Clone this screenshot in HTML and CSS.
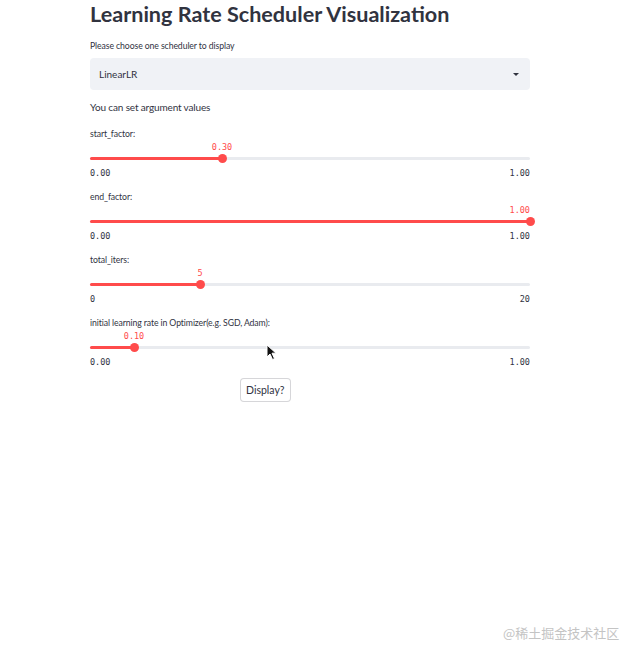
FILE: index.html
```html
<!DOCTYPE html>
<html>
<head>
<meta charset="utf-8">
<link rel="stylesheet" href="styles.css">
</head>
<body>
<main class="main">
  <h1 class="title">Learning Rate Scheduler Visualization</h1>
  <div class="small-label">Please choose one scheduler to display</div>
  <div class="select">
    <span>LinearLR</span>
    <span class="caret"></span>
  </div>
  <p class="text">You can set argument values</p>

  <div class="slider">
    <div class="small-label">start_factor:</div>
    <div class="value-row"><span class="value" style="left:30%">0.30</span></div>
    <div class="track"><div class="fill" style="width:30%"><span class="thumb"></span></div></div>
    <div class="ticks"><span>0.00</span><span>1.00</span></div>
  </div>

  <div class="slider">
    <div class="small-label">end_factor:</div>
    <div class="value-row"><span class="value value-end">1.00</span></div>
    <div class="track"><div class="fill" style="width:100%"><span class="thumb"></span></div></div>
    <div class="ticks"><span>0.00</span><span>1.00</span></div>
  </div>

  <div class="slider">
    <div class="small-label">total_iters:</div>
    <div class="value-row"><span class="value" style="left:25%">5</span></div>
    <div class="track"><div class="fill" style="width:25%"><span class="thumb"></span></div></div>
    <div class="ticks"><span>0</span><span>20</span></div>
  </div>

  <div class="slider">
    <div class="small-label">initial learning rate in Optimizer(e.g. SGD, Adam):</div>
    <div class="value-row"><span class="value" style="left:10%">0.10</span></div>
    <div class="track"><div class="fill" style="width:10%"><span class="thumb"></span></div></div>
    <div class="ticks"><span>0.00</span><span>1.00</span></div>
  </div>

  <div class="button-row"><button class="button">Display?</button></div>
</main>

<svg class="cursor" width="12" height="17" viewBox="0 0 12 17">
  <path d="M1 1 L1 13 L4 10 L6.5 15.5 L8.5 14.6 L6 9.2 L10 9.2 Z" fill="#111" stroke="#fff" stroke-width="1"/>
</svg>

<div class="watermark">@稀土掘金技术社区</div>
</body>
</html>
```

FILE: styles.css
```css
html, body {
  margin: 0;
  padding: 0;
  background: #ffffff;
}
body {
  width: 640px;
  height: 658px;
  position: relative;
  overflow: hidden;
  font-family: Lato, "Open Sans", sans-serif;
  color: #31333f;
}
.main {
  width: 440px;
  margin-left: 90px;
  display: flex;
  flex-direction: column;
}
.title {
  margin: 0;
  font-size: 21.6px;
  line-height: 28px;
  font-weight: 700;
  color: #31333f;
}
.small-label {
  font-size: 8.7px;
  line-height: 14px;
  letter-spacing: -0.1px;
  color: #31333f;
}
.main > .small-label {
  margin-top: 11px;
}
.select {
  margin-top: 5px;
  height: 32px;
  background: #f0f2f6;
  border-radius: 4px;
  display: flex;
  align-items: center;
  justify-content: space-between;
  padding: 0 11px 0 9px;
  font-size: 10px;
}
.caret {
  width: 0;
  height: 0;
  border-left: 3px solid transparent;
  border-right: 3px solid transparent;
  border-top: 3.5px solid #31333f;
}
.text {
  margin: 10px 0 0;
  font-size: 10px;
  line-height: 14px;
  letter-spacing: -0.15px;
}
.slider {
  margin-top: 13px;
  display: flex;
  flex-direction: column;
}
.slider + .slider {
  margin-top: 11px;
}
.value-row {
  position: relative;
  height: 12px;
}
.value {
  position: absolute;
  top: 0;
  transform: translateX(-50%);
  font-family: "DejaVu Sans Mono", monospace;
  font-size: 8.5px;
  line-height: 12px;
  color: #ff4b4b;
}
.value-end {
  right: 0;
  transform: none;
}
.track {
  height: 3px;
  margin: 4px 0 3px;
  background: #e9ebef;
  border-radius: 2px;
  position: relative;
}
.fill {
  height: 100%;
  background: #ff4b4b;
  border-radius: 2px;
  position: relative;
}
.thumb {
  position: absolute;
  right: -4.5px;
  top: -3px;
  width: 9px;
  height: 9px;
  border-radius: 50%;
  background: #ff4b4b;
}
.ticks {
  margin-top: 4px;
  display: flex;
  justify-content: space-between;
  font-family: "DejaVu Sans Mono", monospace;
  font-size: 8.5px;
  line-height: 12px;
  color: #31333f;
}
.button-row {
  margin-top: 10px;
  padding-left: 150px;
}
.button {
  height: 24px;
  padding: 0 5px;
  background: #ffffff;
  border: 1px solid rgba(49, 51, 63, 0.2);
  border-radius: 4px;
  font-family: Lato, "Open Sans", sans-serif;
  font-size: 10.5px;
  color: #31333f;
}
.cursor {
  position: absolute;
  left: 266px;
  top: 344px;
}
.watermark {
  position: absolute;
  left: 503px;
  top: 624px;
  font-family: "Noto Sans CJK SC", sans-serif;
  font-size: 13px;
  line-height: 18px;
  color: #c4c4c4;
}
```
